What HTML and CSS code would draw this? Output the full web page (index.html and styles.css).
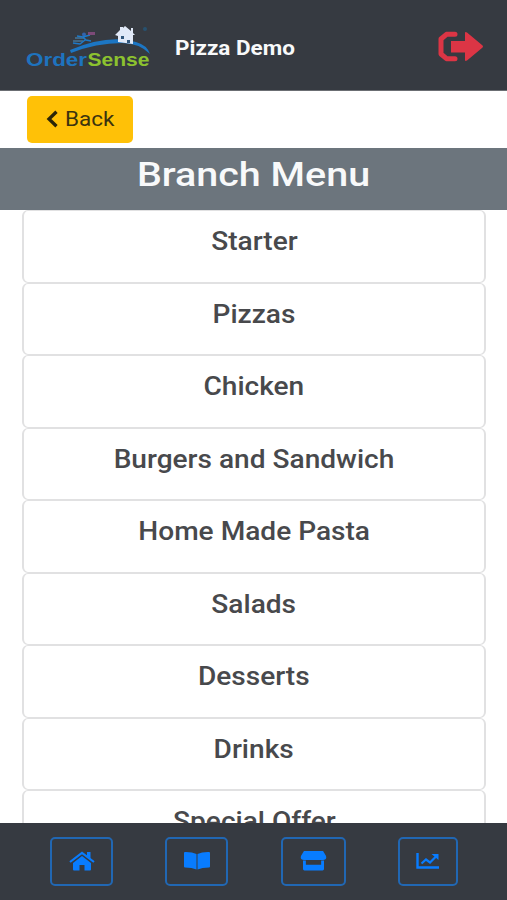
FILE: index.html
```html
<!DOCTYPE html>
<html lang="en">
<head>
<meta charset="utf-8">
<title>Pizza Demo</title>
<link rel="stylesheet" href="styles.css">
</head>
<body>
<div class="app">
  <header class="topbar">
    <svg class="logo" viewBox="0 0 126 46" width="126" height="46" role="img">
      <path d="M44 27Q82 11 110 19Q121 22 124 31Q113 20 96 20Q70 20 45 30Z" fill="#1c76c4"/>
      <path d="M49 15H58M47 18H57" stroke="#4d91c3" stroke-width="1" fill="none"/>
      <circle cx="58" cy="11.500" r="2" fill="#3264ad"/>
      <path d="M51 13L57 14L64 12M57 14L60 17L65 18M59 17L54 21L47 20" stroke="#1d79c9" stroke-width="1.500" fill="none"/>
      <path d="M62 9H69V12H62Z" fill="#7d4a78"/>
      <path d="M89 12L94 7V4H97V5L99 3L105 8V5H107V10L109 12H107V21L92 19V13Z" fill="#e1e9f8"/>
      <path d="M95 13H98V16H95ZM101 17H104V20H101Z" fill="#31567c"/>
      <circle cx="119" cy="6" r="2" fill="#27516f"/>
      <text x="0" y="43" class="logo-text" textLength="61" lengthAdjust="spacingAndGlyphs" fill="#1e73be">Order</text>
      <text x="61.500" y="43" class="logo-text" textLength="62" lengthAdjust="spacingAndGlyphs" fill="#8cc22f">Sense</text>
    </svg>
    <span class="title">Pizza Demo</span>
    <svg class="logout" viewBox="0 0 46 32" width="46" height="32">
      <path d="M17 3.300H8.500L3 8V23L8.500 27.700H17" fill="none" stroke="#dc3545" stroke-width="5" stroke-linecap="round" stroke-linejoin="round"/>
      <path d="M13 10H27V2Q27 .5 29 1.500L44 14Q46 15.500 44 17L29 29.500Q27 30.500 27 29V21.500H13V10Z" fill="#dc3545"/>
    </svg>
  </header>
  <div class="toolbar">
    <button class="back">
      <svg viewBox="0 0 12 18" width="12" height="18"><path d="M10.500 1.800L3 9L10.500 16.200" fill="none" stroke="#2b2608" stroke-width="3.300"/></svg>
      <span class="back-text">Back</span>
    </button>
  </div>
  <div class="heading"><h1>Branch Menu</h1></div>
  <main class="menu">
    <div class="card"><span>Starter</span></div>
    <div class="card"><span>Pizzas</span></div>
    <div class="card"><span>Chicken</span></div>
    <div class="card"><span>Burgers and Sandwich</span></div>
    <div class="card"><span>Home Made Pasta</span></div>
    <div class="card"><span>Salads</span></div>
    <div class="card"><span>Desserts</span></div>
    <div class="card"><span>Drinks</span></div>
    <div class="card"><span>Special Offer</span></div>
  </main>
  <nav class="bottombar">
    <a class="tab"><svg viewBox="0 0 26 20" width="26" height="20"><path d="M1 11L13 1.800L25 11" fill="none" stroke="#087cff" stroke-width="2.200"/><path d="M18 1H21.500V8L18 5Z"/><path d="M13 5L22 12V18.500Q22 19.500 21 19.500H15.500V14H10.500V19.500H5Q4 19.500 4 18.500V12Z"/></svg></a>
    <a class="tab"><svg viewBox="0 0 26 20" width="26" height="20"><path d="M0 2Q0 1 1 1Q8 .8 12.500 3V18.500Q8 16.500 1 16.500Q0 16.500 0 15.500ZM26 2Q26 1 25 1Q18 .8 13.500 3V18.500Q18 16.500 25 16.500Q26 16.500 26 15.500Z"/></svg></a>
    <a class="tab tab-wide"><svg viewBox="0 0 28 22" width="27" height="21"><path d="M4 1H24L27 6Q28.500 10 24 10.500H4Q-.5 10 1 6ZM3 11H6V15.500H22V11H25V20Q25 21.500 23.500 21.500H4.500Q3 21.500 3 20Z"/></svg></a>
    <a class="tab tab-narrow"><svg viewBox="0 0 24 18" width="24" height="18"><path d="M1.500 1V15.500H23" fill="none" stroke="#087cff" stroke-width="2.400"/><path d="M5.500 11.500L10 7.500L14 10.500L20 4.500" fill="none" stroke="#087cff" stroke-width="2.200"/><path d="M15.500 2H22.500V8Z"/></svg></a>
  </nav>
</div>
</body>
</html>
```
FILE: styles.css
```css
* { box-sizing: border-box; }
body { margin: 0; font-family: Roboto, "Liberation Sans", sans-serif; background: #fff; }
.app { width: 507px; height: 900px; display: flex; flex-direction: column; overflow: hidden; }
.topbar { height: 91px; flex: none; background: #363a41; border-bottom: 1px solid #6b6e73; display: flex; align-items: center; padding: 3px 23px 0 26px; }
.logo { flex: none; margin-top: -1px; }
.logo-text { font: bold 18.500px "Liberation Sans", sans-serif; }
.title { margin: 2px 0 0 23px; color: #f8f9fa; font-weight: 700; font-size: 20px; transform: scaleX(1.125); transform-origin: left; white-space: nowrap; }
.logout { margin-left: auto; }
.toolbar { height: 57px; flex: none; padding: 5px 27px; }
.back { width: 106px; height: 47px; border: 0; border-radius: 5px; background: #ffc107; display: flex; align-items: center; gap: 7px; padding: 0 0 1px 19px; font: 400 21px Roboto, sans-serif; color: #3b330f; }
.back-text { transform: scaleX(1.07); transform-origin: left; }
.heading { height: 62px; flex: none; background: #6c757d; text-align: center; padding-top: 6px; }
h1 { margin: 0; font-size: 34px; line-height: 40px; font-weight: 500; color: #f8f9fa; transform: scaleX(1.16); }
.menu { flex: 1; min-height: 0; overflow: hidden; padding: 0 21px 0 22px; }
.card { height: 72.550px; border: 2px solid #e1e1e2; border-radius: 6px; border-bottom-width: 1px; border-top-width: 1px; text-align: center; padding-top: 15px; }
.card span { display: inline-block; font-size: 25px; line-height: 32px; font-weight: 500; color: #48494c; transform: scaleX(1.123); white-space: nowrap; }
.bottombar { height: 77px; flex: none; background: #363a41; display: flex; justify-content: space-between; align-items: flex-start; padding: 14px 49px 0 50px; }
.tab { width: 63px; height: 49px; border: 2px solid #2167b3; border-radius: 5px; display: flex; align-items: center; justify-content: center; padding-bottom: 2px; }
.tab svg { fill: #087cff; }
.tab-wide { width: 65px; }
.tab-narrow { width: 60px; }
```
